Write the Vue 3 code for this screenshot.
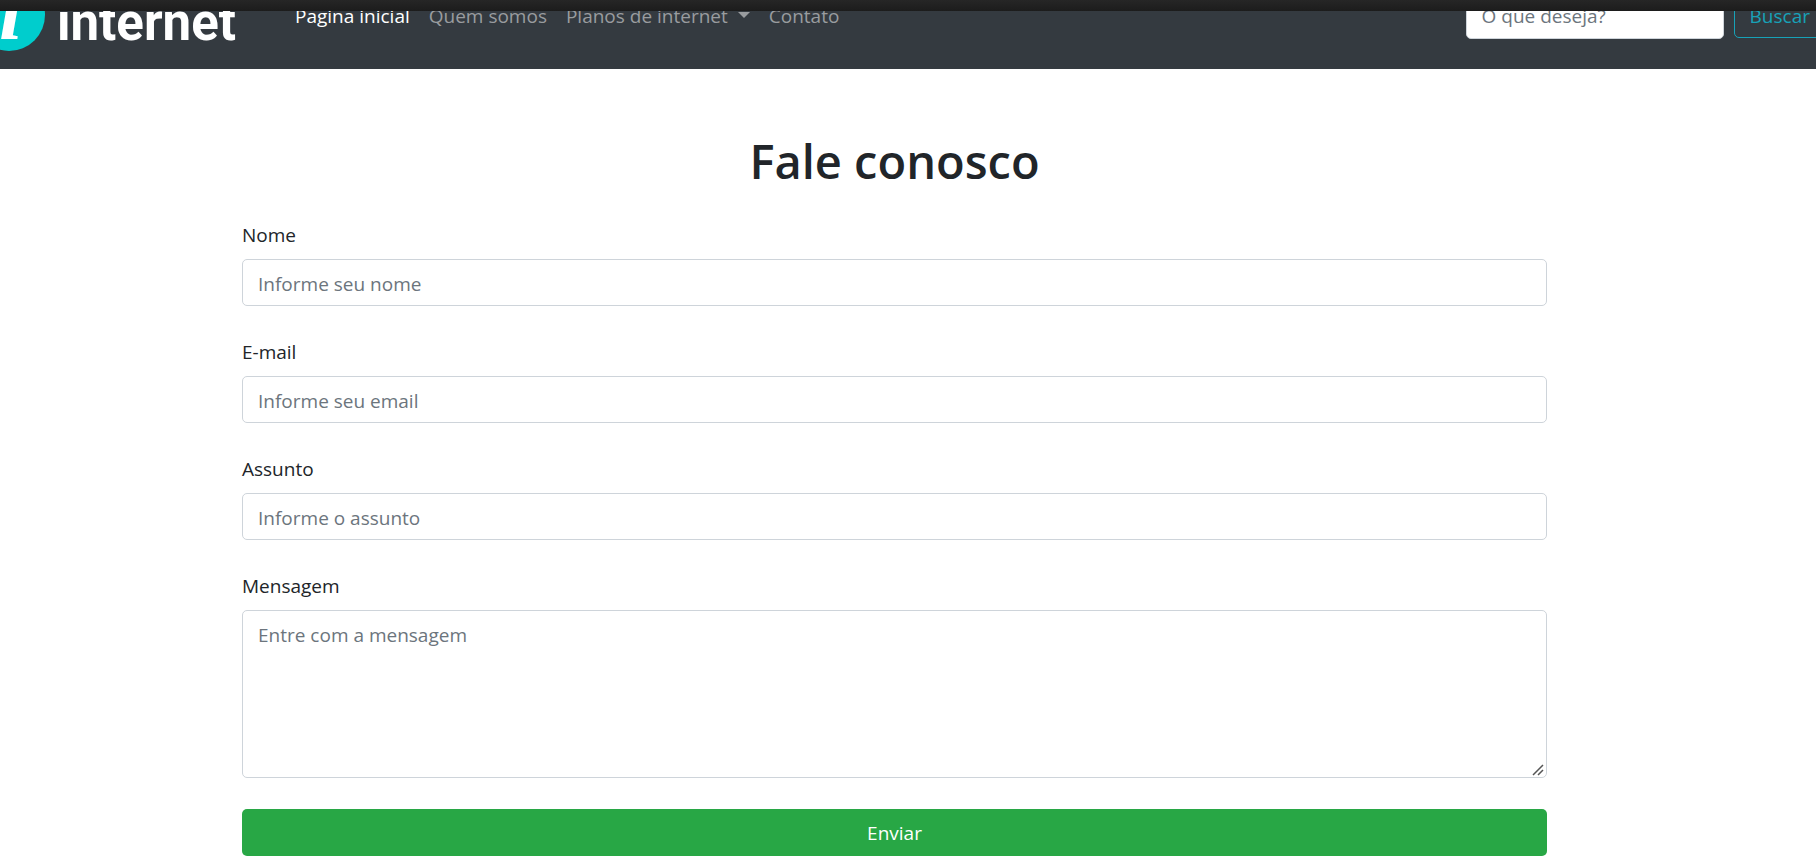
<script setup>
import { ref } from 'vue'

const search = ref('')
const fields = [
  { id: 'nome', label: 'Nome', type: 'text', placeholder: 'Informe seu nome' },
  { id: 'email', label: 'E-mail', type: 'email', placeholder: 'Informe seu email' },
  { id: 'assunto', label: 'Assunto', type: 'text', placeholder: 'Informe o assunto' },
]
</script>

<template>
  <div class="page">
    <div class="strip"></div>
    <header class="navbar">
      <a class="brand" href="#" aria-label="internet">
        <svg width="240" height="58" viewBox="0 0 240 58">
          <circle cx="9" cy="4" r="36" fill="#00cdcd" />
          <text class="brand-i" x="-1" y="28">i</text>
          <text class="brand-name" x="57" y="29">internet</text>
        </svg>
      </a>
      <nav class="links">
        <a class="active" href="#">Pagina inicial</a>
        <a href="#">Quem somos</a>
        <a href="#">Planos de internet<span class="caret"></span></a>
        <a href="#">Contato</a>
      </nav>
      <form class="search" @submit.prevent>
        <input v-model="search" type="search" placeholder="O que deseja?" aria-label="O que deseja?" />
        <button type="submit">Buscar</button>
      </form>
    </header>
    <main class="content">
      <h1>Fale conosco</h1>
      <form @submit.prevent>
        <div v-for="f in fields" :key="f.id" class="group">
          <label :for="f.id">{{ f.label }}</label>
          <input :id="f.id" class="control" :type="f.type" :placeholder="f.placeholder" />
        </div>
        <div class="group">
          <label for="mensagem">Mensagem</label>
          <div class="area">
            <textarea id="mensagem" class="control" placeholder="Entre com a mensagem"></textarea>
            <svg class="grip" width="12" height="12" viewBox="0 0 12 12" aria-hidden="true">
              <path d="M1 11L11 1M6 11L11 6" fill="none" stroke="#555" stroke-width="1.5" />
            </svg>
          </div>
        </div>
        <button class="send" type="submit">Enviar</button>
      </form>
    </main>
  </div>
</template>

<style>
body {
  margin: 0;
  background: #fff;
}
</style>

<style scoped>
.page,
.page * {
  box-sizing: border-box;
}
.page {
  overflow: hidden;
  color: #212529;
  font-family: "Segoe UI", "Open Sans", "Noto Sans", sans-serif;
  font-size: 19px;
  line-height: 30px;
}
.page input,
.page textarea,
.page button {
  font: inherit;
}
.strip {
  height: 11px;
  background: linear-gradient(#262626, #1c1c1c);
}
.navbar {
  display: flex;
  align-items: flex-end;
  height: 58px;
  overflow: hidden;
  background: #343a40;
}
.brand {
  height: 58px;
}
.brand svg {
  display: block;
}
.brand-i {
  font: italic bold 84px "Liberation Serif", serif;
  fill: #fff;
}
.brand-name {
  font: bold 51px Roboto, sans-serif;
  fill: #fff;
}
.links {
  display: flex;
  gap: 19px;
  margin-left: 55px;
  padding-bottom: 38px;
}
.links a {
  color: #999c9f;
  text-decoration: none;
  white-space: nowrap;
}
.links a.active {
  color: #fff;
}
.caret {
  display: inline-block;
  margin-left: 10px;
  border: 6px solid transparent;
  border-top-color: currentColor;
  border-bottom: 0;
  vertical-align: 5px;
}
.search {
  display: flex;
  flex: none;
  gap: 10px;
  margin-left: auto;
  margin-right: -10px;
  padding-bottom: 30px;
}
.search input {
  width: 258px;
  height: 47px;
  padding: 0 15px;
  border: 1px solid #ced4da;
  border-radius: 5px;
  background: #fff;
}
.search button {
  height: 46px;
  padding: 1px 15px 0;
  border: 1px solid #17a2b8;
  border-radius: 5px;
  background: transparent;
  color: #17a2b8;
}
.content {
  margin: 0 269px 0 242px;
}
h1 {
  margin: 0;
  padding: 62px 0 29px;
  font-size: 47px;
  font-weight: 600;
  line-height: 60px;
  text-align: center;
}
.group {
  margin-bottom: 31px;
}
label {
  display: block;
  margin-bottom: 9px;
}
.control {
  display: block;
  width: 100%;
  height: 47px;
  padding: 9px 15px 7px;
  border: 1px solid #ced4da;
  border-radius: 5px;
  background: #fff;
  color: #495057;
}
.area {
  position: relative;
}
textarea.control {
  height: 168px;
  resize: vertical;
}
textarea::-webkit-resizer {
  background: transparent;
}
.grip {
  position: absolute;
  right: 3px;
  bottom: 2px;
  pointer-events: none;
}
::placeholder {
  color: #6c757d;
  opacity: 1;
}
.send {
  display: block;
  width: 100%;
  height: 47px;
  padding: 1px 15px 0;
  border: 0;
  border-radius: 5px;
  background: #28a745;
  color: #fff;
}
</style>
